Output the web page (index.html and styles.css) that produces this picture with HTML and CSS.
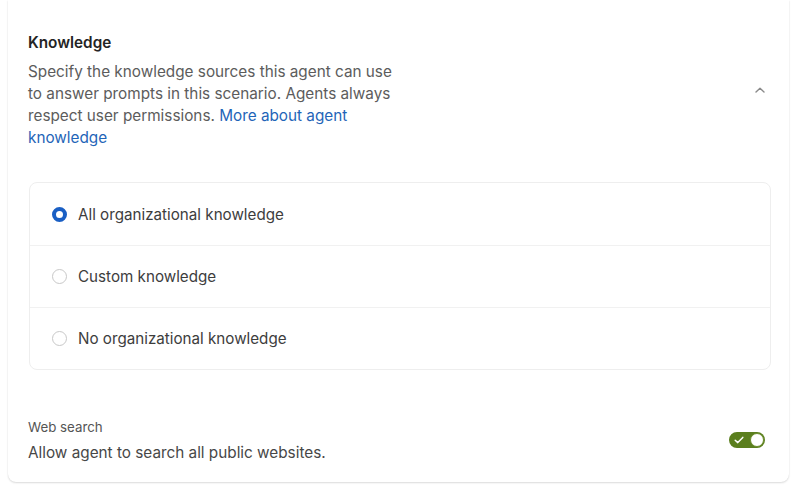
FILE: index.html
```html
<!DOCTYPE html>
<html lang="en">
<head>
<meta charset="utf-8">
<title>Knowledge</title>
<link rel="stylesheet" href="styles.css">
</head>
<body>
<main class="card">
  <section class="header">
    <div class="header-text">
      <h2 class="title">Knowledge</h2>
      <p class="desc">Specify the knowledge sources this agent can use to answer prompts in this scenario. Agents always respect user permissions. <a class="link" href="#">More about agent knowledge</a></p>
    </div>
    <svg class="chevron" width="12" height="8" viewBox="0 0 12 8" aria-hidden="true">
      <path d="M2 6 L6 2.2 L10 6" fill="none" stroke="#8a8a8a" stroke-width="1.4" stroke-linecap="round" stroke-linejoin="round"/>
    </svg>
  </section>

  <div class="options">
    <label class="option">
      <span class="radio radio-on"></span>
      <span class="option-text">All organizational knowledge</span>
    </label>
    <label class="option">
      <span class="radio"></span>
      <span class="option-text">Custom knowledge</span>
    </label>
    <label class="option">
      <span class="radio"></span>
      <span class="option-text">No organizational knowledge</span>
    </label>
  </div>

  <section class="web">
    <div class="web-text">
      <div class="web-label">Web search</div>
      <div class="web-desc">Allow agent to search all public websites.</div>
    </div>
    <span class="toggle">
      <svg class="check" width="10" height="8" viewBox="0 0 10 8" aria-hidden="true">
        <path d="M1.2 4.2 L3.8 6.6 L8.8 1.4" fill="none" stroke="#ffffff" stroke-width="1.5" stroke-linecap="round" stroke-linejoin="round"/>
      </svg>
      <span class="knob"></span>
    </span>
  </section>
</main>
</body>
</html>
```

FILE: styles.css
```css
* { box-sizing: border-box; }

html, body {
  margin: 0;
  background: #ffffff;
}

body {
  padding: 0 11px 0 8px;
  font-family: Inter, "Open Sans", "Liberation Sans", sans-serif;
  color: #424242;
  height: 492px;
  overflow: hidden;
}

.card {
  background: #ffffff;
  border-radius: 0 0 8px 8px;
  box-shadow: 0 1px 2px rgba(0,0,0,0.14), 0 0 1px rgba(0,0,0,0.08);
  padding: 33px 18px 19px 20px;
}

.header {
  display: flex;
  align-items: center;
  gap: 20px;
}

.header-text {
  flex: 1;
}

.title {
  margin: 0 0 8px 0;
  font-size: 15.3px;
  line-height: 20px;
  font-weight: 600;
  color: #242424;
}

.desc {
  margin: 0;
  width: 372px;
  font-size: 15.3px;
  line-height: 22px;
  color: #5c5c5c;
}

.link {
  color: #1f65b8;
  text-decoration: none;
}

.chevron {
  margin-right: 5px;
  margin-top: -2px;
}

.options {
  margin: 33px 0 0 1px;
  border: 1px solid #eeeeee;
  border-radius: 8px;
  display: flex;
  flex-direction: column;
}

.option {
  height: 62px;
  display: flex;
  align-items: center;
  gap: 11px;
  padding-left: 22px;
  font-size: 15.2px;
  color: #3d3d3d;
}

.option + .option {
  border-top: 1.5px solid #f1f1f1;
}

.radio {
  width: 15px;
  height: 15px;
  border-radius: 50%;
  border: 1px solid #c8c8c8;
  background: #ffffff;
  flex: none;
}

.radio-on {
  border: 4px solid #1a5fc4;
}

.web {
  margin-top: 49px;
  display: flex;
  align-items: center;
  justify-content: space-between;
}

.web-label {
  font-size: 13.3px;
  line-height: 16px;
  color: #555555;
}

.web-desc {
  margin-top: 8px;
  font-size: 15.3px;
  line-height: 20px;
  color: #474747;
}

.toggle {
  width: 36px;
  height: 16px;
  border-radius: 8px;
  background: #5b7f1e;
  display: flex;
  align-items: center;
  justify-content: space-between;
  padding: 0 1px 0 5px;
  margin-right: 6px;
  margin-top: -2px;
}

.knob {
  width: 14px;
  height: 14px;
  border-radius: 50%;
  background: #ffffff;
  border: 1px solid #6b8d2c;
}
```
